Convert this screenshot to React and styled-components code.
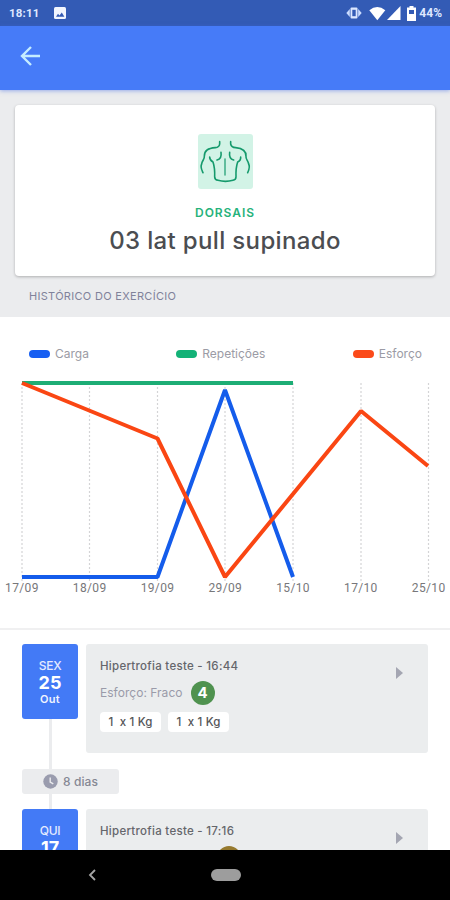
import React from "react";
import styled, { createGlobalStyle } from "styled-components";

const GlobalStyle = createGlobalStyle`
  * { box-sizing: border-box; }
  body { margin: 0; background: #fff; }
`;

const Screen = styled.div`
  width: 450px;
  height: 900px;
  overflow: hidden;
  display: flex;
  flex-direction: column;
  background: #fff;
  font-family: Inter, sans-serif;
`;

const Label = styled.span`
  display: block;
  white-space: pre;
  font-size: ${(p) => p.$size}px;
  line-height: ${(p) => p.$line || 16}px;
  font-weight: ${(p) => p.$weight || 400};
  letter-spacing: ${(p) => p.$track || 0}px;
  color: ${(p) => p.$color};
`;

const StatusBar = styled.header`
  flex: none;
  height: 26px;
  padding: 0 8px 0 9px;
  display: flex;
  align-items: center;
  justify-content: space-between;
  background: #335bb5;
  font-family: Roboto, sans-serif;
`;

const StatusGroup = styled.div`
  display: flex;
  align-items: center;
`;

const Glyph = styled.svg`
  display: block;
  flex: none;
  margin-left: ${(p) => p.$gap || 0}px;
`;

const BatteryLevel = styled.div`
  margin-left: 3px;
`;

const AppBar = styled.nav`
  flex: none;
  height: 64px;
  padding: 3px 0 0 20px;
  display: flex;
  align-items: flex-start;
  background: #467bf8;
  box-shadow: 0 1px 4px rgba(70, 110, 230, 0.5);
  z-index: 1;
`;

const BackButton = styled.button`
  border: 0;
  padding: 16px 0;
  background: none;
`;

const Summary = styled.section`
  flex: none;
  height: 227px;
  padding: 15px 15px 0;
  background: #ebecee;
`;

const ExerciseCard = styled.div`
  height: 171px;
  padding-top: 29px;
  display: flex;
  flex-direction: column;
  align-items: center;
  border-radius: 4px;
  background: #fff;
  box-shadow: 0 1px 3px rgba(0, 0, 0, 0.26);
`;

const MuscleTile = styled.div`
  width: 55px;
  height: 55px;
  margin-bottom: 15px;
  border-radius: 3px;
  background: #d2f3e6;
`;

const SectionHeading = styled.h2`
  margin: 12px 0 0 14px;
`;

const ChartPanel = styled.section`
  flex: none;
  height: 313px;
  padding-top: 28px;
  border-bottom: 2px solid #f0f0f1;
`;

const Legend = styled.div`
  height: 17px;
  padding: 0 28px 0 29px;
  display: flex;
  justify-content: space-between;
`;

const LegendItem = styled.div`
  display: flex;
  align-items: center;
  gap: 5px;
`;

const Swatch = styled.i`
  width: 21px;
  height: 8px;
  border-radius: 4px;
  background: ${(p) => p.$color};
`;

const ChartSvg = styled.svg`
  display: block;
  margin-top: 8px;
`;

const AxisLabels = styled.div`
  display: grid;
  grid-template-columns: repeat(7, 67.8px);
  margin: -10px 0 0 -12px;
  text-align: center;
  font-family: Roboto, sans-serif;
`;

const Timeline = styled.main`
  flex: 1;
  min-height: 0;
  overflow: hidden;
  padding: 14px 22px 0;
`;

const Session = styled.article`
  display: flex;
  gap: 8px;
  height: ${(p) => p.$height}px;
`;

const DateColumn = styled.div`
  width: 56px;
  display: flex;
  flex-direction: column;
  align-items: center;
`;

const DateBox = styled.div`
  flex: none;
  width: 56px;
  height: 75px;
  padding-top: 14px;
  border-radius: 3px;
  background: #437af6;
  text-align: center;
`;

const Connector = styled.div`
  width: 3px;
  height: ${(p) => p.$height}px;
  margin-left: ${(p) => p.$inset || 0}px;
  background: #ebecee;
`;

const SessionCard = styled.div`
  width: 342px;
  height: 109px;
  padding: 14px 24px 0 14px;
  display: flex;
  justify-content: space-between;
  align-items: flex-start;
  border-radius: 3px;
  background: #ebedee;
`;

const EffortRow = styled.div`
  display: flex;
  align-items: center;
  height: 24px;
  margin: 6px 0 7px;
`;

const EffortBadge = styled.span`
  width: 24px;
  height: 24px;
  margin-left: 8px;
  border-radius: 50%;
  background: ${(p) => p.$color};
  color: #fff;
  font-size: 15px;
  line-height: 24px;
  font-weight: 700;
  text-align: center;
`;

const Chips = styled.div`
  display: flex;
  gap: 7px;
`;

const Chip = styled.div`
  width: 61px;
  height: 20px;
  display: flex;
  justify-content: center;
  border-radius: 4px;
  background: #fff;
`;

const IntervalPill = styled.div`
  width: 97px;
  height: 25px;
  padding-left: 21px;
  display: flex;
  align-items: center;
  gap: 5px;
  border-radius: 3px;
  background: #ebecee;
`;

const NavigationBar = styled.footer`
  flex: none;
  height: 50px;
  padding-left: 88px;
  display: flex;
  align-items: center;
  background: #000;
`;

const HomeHandle = styled.i`
  width: 30px;
  height: 12px;
  margin-left: 115px;
  border-radius: 6px;
  background: #9d9d9d;
`;

const DATES = ["17/09", "18/09", "19/09", "29/09", "15/10", "17/10", "25/10"];
const GRID_X = [22, 89.5, 157.5, 225, 293, 361, 428.5];

function BackMuscles() {
  return (
    <svg width="55" height="55" viewBox="-1 0 165 165" fill="none" stroke="#159a6c" strokeWidth="4.8" strokeLinecap="round" strokeLinejoin="round">
      <path d="M64 23v7Q63 40 51 41C29 43 18 49 18 67C19 76 11 80 10 90C5 99 10 107 14 116" />
      <path d="M97 23v7Q99 40 112 41C132 43 144 49 143 67C142 76 149 80 151 90C156 99 152 107 148 116" />
      <path d="M68 55Q71 74 56 78M94 55Q91 74 106 78" />
      <path d="M34 69Q34 79 44 84Q50 102 49 128Q49 137 59 139Q81 145 104 139Q113 137 113 128Q112 102 118 84Q128 79 127 69" />
      <path d="M80 75v48" strokeOpacity=".75" />
    </svg>
  );
}

function HistoryChart() {
  return (
    <ChartSvg width="450" height="220" viewBox="0 370 450 220" fill="none">
      {GRID_X.map((x) => (
        <path key={x} d={`M${x} 383V581`} stroke="#d4d4d6" strokeWidth="1.2" strokeDasharray="2 2" />
      ))}
      <g strokeWidth="4">
        <path d="M22 577H157.5L225 390L293 577" stroke="#145ceb" strokeLinejoin="bevel" />
        <path d="M22 383H293" stroke="#1dad75" />
        <path d="M22 383L157.5 438.5L225 577L361 411L428 466" stroke="#fa4613" strokeLinejoin="bevel" />
      </g>
    </ChartSvg>
  );
}

function SessionItem({ weekday, day, month, title, effort, score, color, sets, height, line }) {
  return (
    <Session $height={height}>
      <DateColumn>
        <DateBox>
          <Label $size={12} $line={15} $weight={500} $color="#e3eaff" $track={-0.3}>{weekday}</Label>
          <Label $size={18} $line={19} $weight={700} $color="#fff">{day}</Label>
          <Label $size={11} $line={14} $weight={600} $color="#f0f4ff" $track={0.3}>{month}</Label>
        </DateBox>
        <Connector $height={line} />
      </DateColumn>
      <SessionCard>
        <div>
          <Label $size={11.5} $line={17} $weight={500} $color="#65666b" $track={0.28}>{title}</Label>
          <EffortRow>
            <Label $size={12} $color="#9a9ba9" $track={0.03}>{effort}</Label>
            <EffortBadge $color={color}>{score}</EffortBadge>
          </EffortRow>
          <Chips>
            {sets.map((set, i) => (
              <Chip key={i}>
                <Label $size={11.5} $line={21} $weight={500} $color="#555659" $track={0.15}>{set}</Label>
              </Chip>
            ))}
          </Chips>
        </div>
        <Glyph width="8" height="30" viewBox="0 0 8 30">
          <path d="M0 9L7 15L0 21Z" fill="#a4a6b2" />
        </Glyph>
      </SessionCard>
    </Session>
  );
}

export default function App() {
  return (
    <Screen>
      <GlobalStyle />
      <StatusBar>
        <StatusGroup>
          <Label $size={11.5} $weight={700} $color="#dfe8ff" $track={0.2}>18:11</Label>
          <Glyph width="12" height="12" viewBox="0 0 12 12" $gap={14}>
            <rect width="12" height="12" rx="1.5" fill="#f1f6ff" />
            <path d="M2 9.7L4 6.7L5.5 8.4L7.8 5.5L10.4 9.7Z" fill="#335bb5" />
          </Glyph>
        </StatusGroup>
        <StatusGroup>
          <Glyph width="16" height="14" viewBox="0 0 16 14">
            <rect x="4.5" y="1.5" width="7" height="11" rx="1" fill="#dce7ff" />
            <path d="M3.8 3L0.3 7L3.8 11ZM12.2 3L15.7 7L12.2 11Z" fill="#cbdcff" />
            <path d="M6.3 3.8V10.2H9.7V3.8Z" fill="#335bb5" />
          </Glyph>
          <Glyph width="17" height="15" viewBox="0 0 17 15" $gap={7}>
            <path d="M0.3 4.2Q8.3 -2 16.3 4.2L8.3 14.2Z" fill="#fff" />
          </Glyph>
          <Glyph width="14" height="14" viewBox="0 0 14 14" $gap={1}>
            <path d="M13.5 0V14H0Z" fill="#fff" />
          </Glyph>
          <Glyph width="9" height="15" viewBox="0 0 9 15" $gap={6}>
            <path d="M2.5 0H6.5V1.5H9V15H0V1.5H2.5Z" fill="#fff" />
            <path d="M2 4H7V8H2Z" fill="#335bb5" />
          </Glyph>
          <BatteryLevel>
            <Label $size={12} $weight={700} $color="#dfe8ff">44%</Label>
          </BatteryLevel>
        </StatusGroup>
      </StatusBar>
      <AppBar>
        <BackButton aria-label="Voltar">
          <Glyph width="21" height="22" viewBox="0 0 21 22" fill="none" stroke="#c5ecff" strokeWidth="2.4">
            <path d="M11 2L2 11L11 20M2.5 11H20" />
          </Glyph>
        </BackButton>
      </AppBar>
      <Summary>
        <ExerciseCard>
          <MuscleTile><BackMuscles /></MuscleTile>
          <Label $size={12} $line={17} $weight={600} $color="#26b27b" $track={0.95}>DORSAIS</Label>
          <Label $size={24} $line={40} $weight={500} $color="#4b4d51" $track={0.35}>03 lat pull supinado</Label>
        </ExerciseCard>
        <SectionHeading>
          <Label $size={11} $color="#80829a" $track={0.3}>HISTÓRICO DO EXERCÍCIO</Label>
        </SectionHeading>
      </Summary>
      <ChartPanel>
        <Legend>
          {[["Carga", "#175ff2"], ["Repetições", "#13b277"], ["Esforço", "#fb4a1a"]].map(([name, color]) => (
            <LegendItem key={name}>
              <Swatch $color={color} />
              <Label $size={12} $color="#9b9ba5">{name}</Label>
            </LegendItem>
          ))}
        </Legend>
        <HistoryChart />
        <AxisLabels>
          {DATES.map((d) => (
            <Label key={d} $size={12} $color="#77777a" $track={0.35}>{d}</Label>
          ))}
        </AxisLabels>
      </ChartPanel>
      <Timeline>
        <SessionItem
          weekday="SEX" day="25" month="Out" title="Hipertrofia teste - 16:44"
          effort="Esforço: Fraco" score="4" color="#4f924f"
          sets={["1  x 1 Kg", "1  x 1 Kg"]} height={125} line={50}
        />
        <IntervalPill>
          <Glyph width="15" height="15" viewBox="0 0 15 15">
            <circle cx="7.5" cy="7.5" r="7.2" fill="#9a9cae" />
            <path d="M7.2 3.5V8L10.3 9.8" fill="none" stroke="#ebecee" strokeWidth="1.4" />
          </Glyph>
          <Label $size={12} $weight={500} $color="#858793" $track={0.1}>8 dias</Label>
        </IntervalPill>
        <Connector $height={15} $inset={26.5} />
        <SessionItem
          weekday="QUI" day="17" month="Out" title="Hipertrofia teste - 17:16"
          effort="Esforço: Moderado" score="6" color="#967a2f"
          sets={["1  x 1 Kg"]} height={109} line={34}
        />
      </Timeline>
      <NavigationBar>
        <Glyph width="8" height="12" viewBox="0 0 8 12" fill="none" stroke="#a5a5a5" strokeWidth="1.8">
          <path d="M7 1L2 6L7 11" />
        </Glyph>
        <HomeHandle />
      </NavigationBar>
    </Screen>
  );
}
